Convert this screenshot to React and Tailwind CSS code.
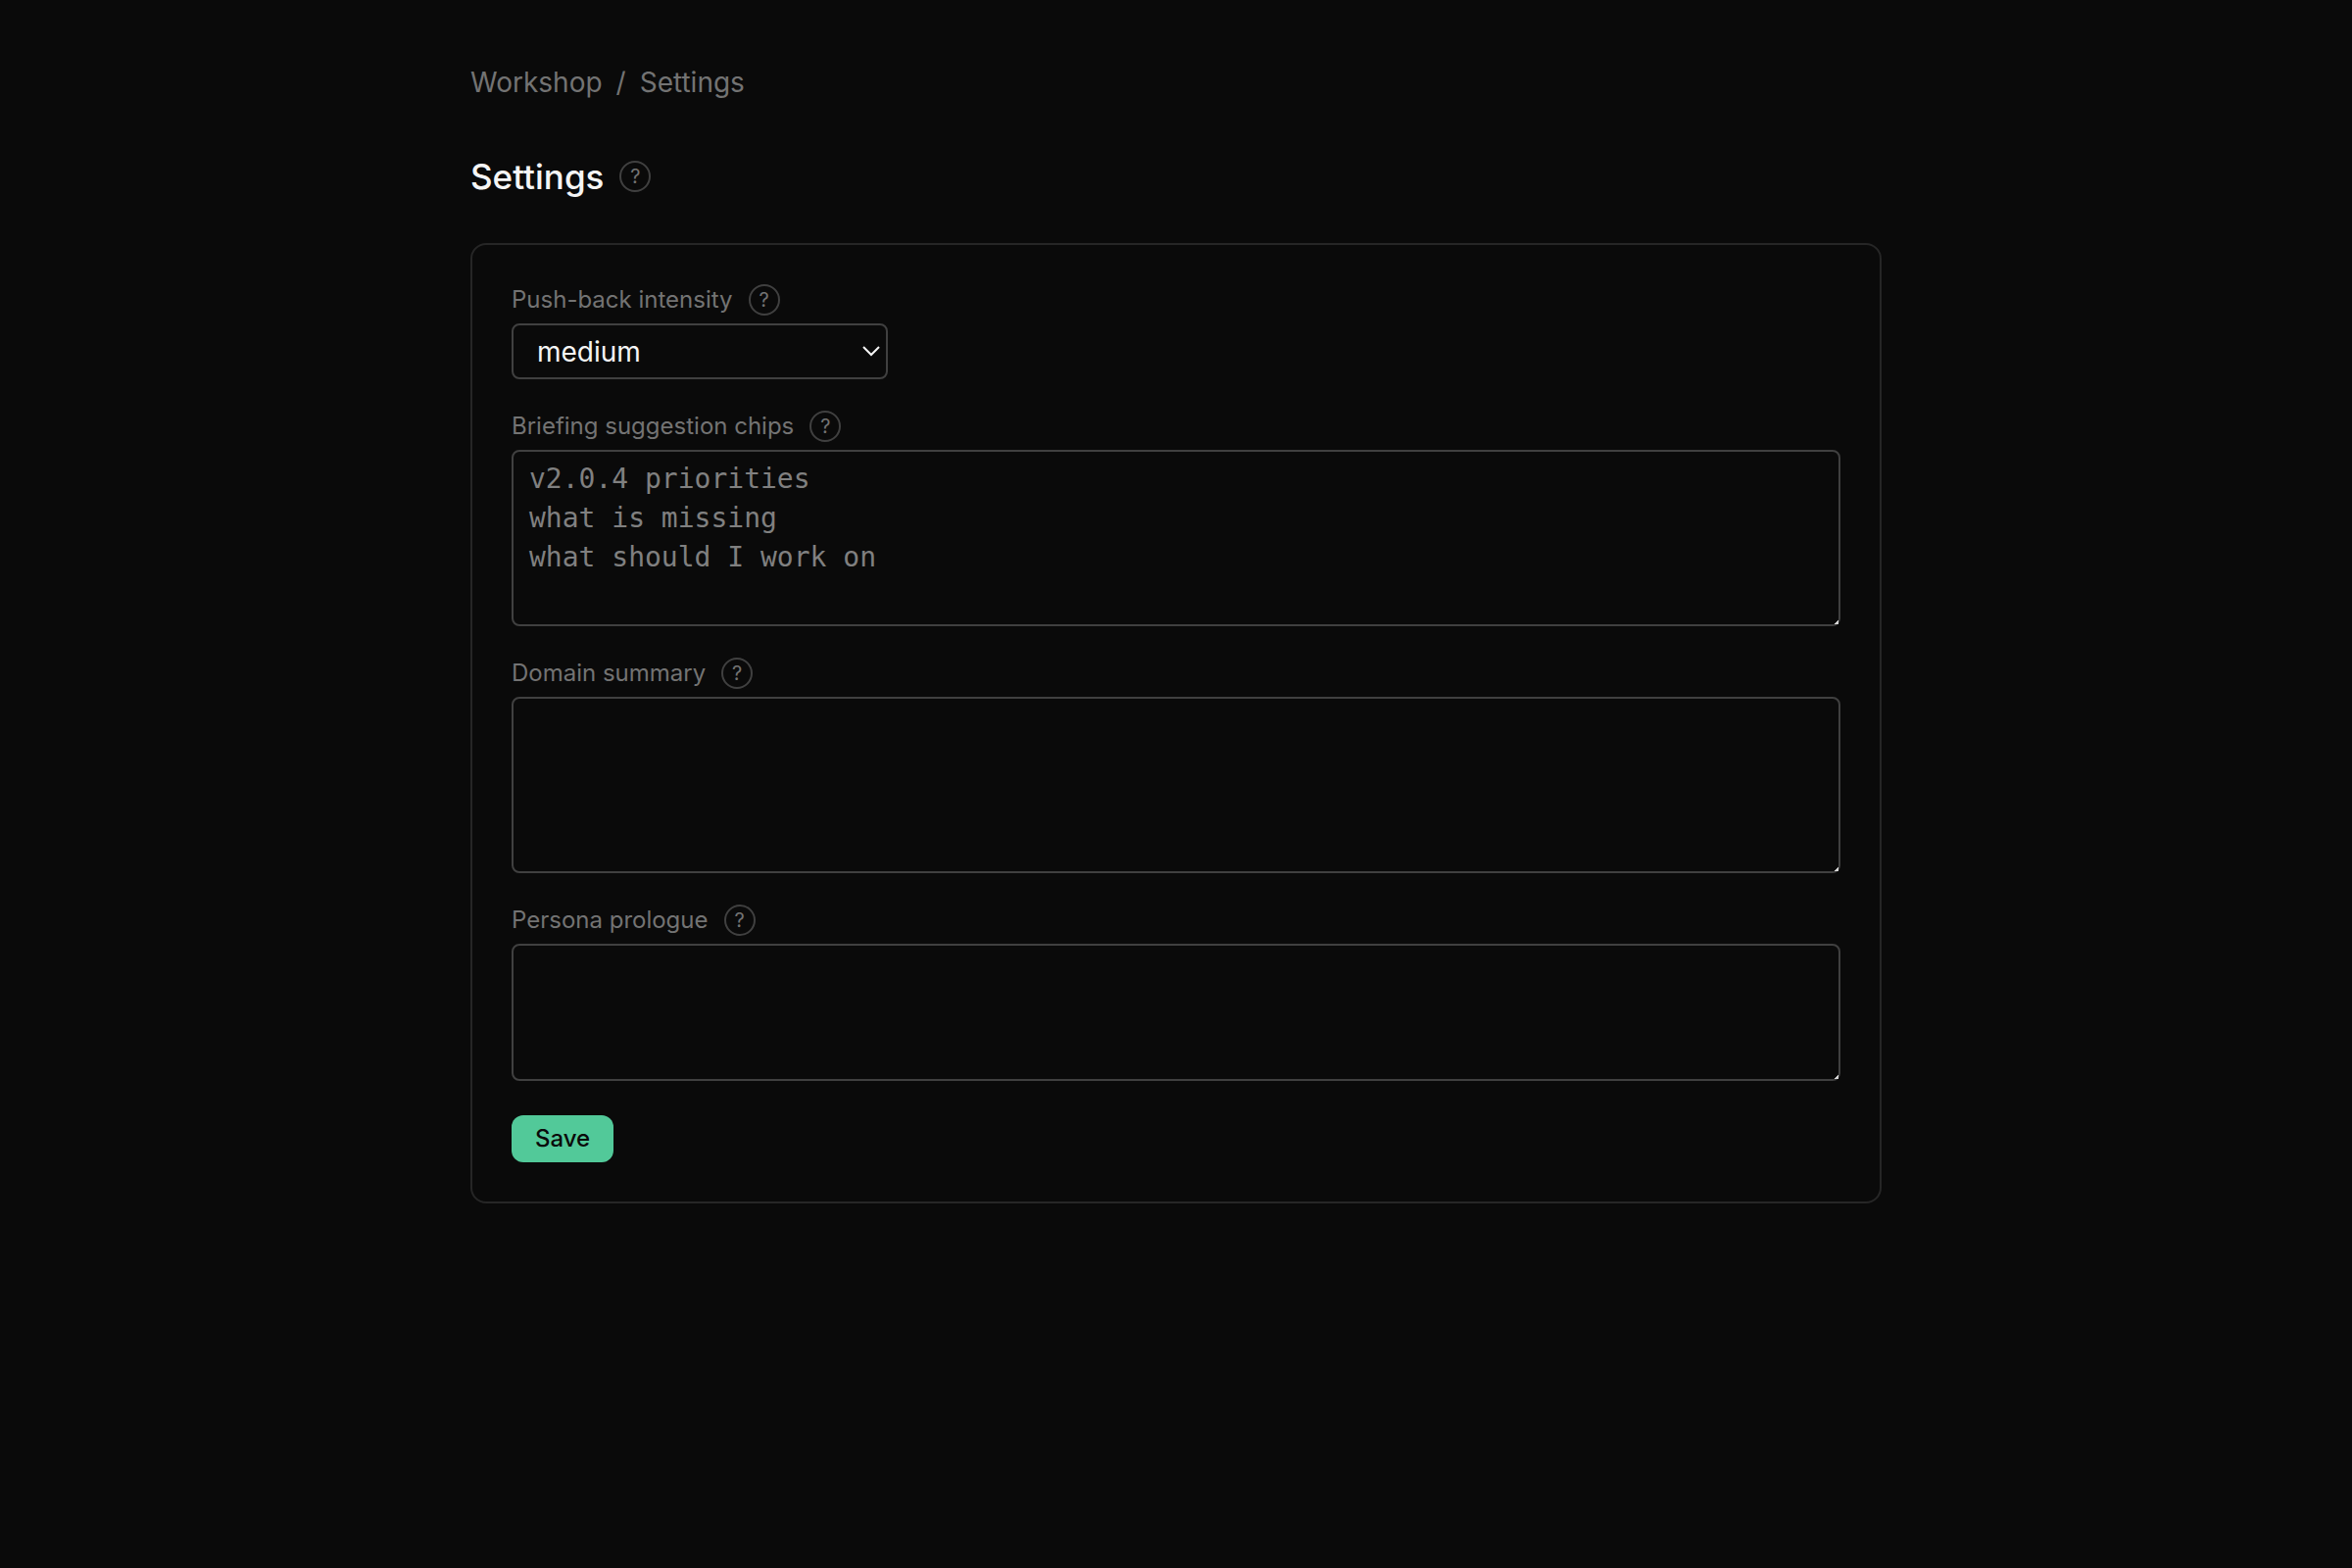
import { useState } from "react";

const INTENSITIES = ["low", "medium", "high"];

function HelpButton({ topic }) {
  return (
    <button
      type="button"
      aria-label={`Help: ${topic}`}
      className="flex size-8 shrink-0 items-center justify-center rounded-full border-2 border-[#404040] text-[20px] leading-none text-[#737373]"
    >
      ?
    </button>
  );
}

function Field({ id, label, children }) {
  return (
    <div className="flex flex-col gap-2">
      <div className="flex items-center gap-4">
        <label htmlFor={id} className="text-2xl text-[#737373]">
          {label}
        </label>
        <HelpButton topic={label} />
      </div>
      {children}
    </div>
  );
}

function TextArea({ id, value, onChange, placeholder, className }) {
  return (
    <textarea
      id={id}
      value={value}
      onChange={(e) => onChange(e.target.value)}
      placeholder={placeholder}
      className={`block w-full rounded-lg border-2 border-[#404040] bg-[#0a0a0a] px-4 py-2 font-['DejaVu_Sans_Mono',monospace] text-[28px] leading-10 text-[#f5f5f5] placeholder:text-[#808080] [&::-webkit-resizer]:bg-[linear-gradient(135deg,transparent_84%,#d4d4d4_84%)] ${className}`}
    />
  );
}

export default function App() {
  const [intensity, setIntensity] = useState("medium");
  const [chips, setChips] = useState("");
  const [summary, setSummary] = useState("");
  const [prologue, setPrologue] = useState("");

  return (
    <div className="min-h-screen bg-[#0a0a0a] font-['Inter',sans-serif] text-[#f5f5f5] [color-scheme:dark]">
      <main className="mx-auto max-w-[1440px] pt-16 pb-16">
        <nav aria-label="Breadcrumb" className="flex gap-3.5 text-[28px] leading-10 text-[#737373]">
          <a href="#workshop">Workshop</a>
          <span>/</span>
          <span>Settings</span>
        </nav>

        <div className="mt-12 flex items-center gap-4">
          <h1 className="text-[35px] leading-14 font-medium">Settings</h1>
          <HelpButton topic="Settings" />
        </div>

        <form
          onSubmit={(e) => e.preventDefault()}
          className="mt-10 flex flex-col gap-8 rounded-2xl border-2 border-[#262626] p-10"
        >
          <Field id="intensity" label="Push-back intensity">
            <div className="relative w-96">
              <select
                id="intensity"
                value={intensity}
                onChange={(e) => setIntensity(e.target.value)}
                className="block h-[57px] w-full appearance-none rounded-lg border-2 border-[#404040] bg-[#0a0a0a] px-6 text-[28px]"
              >
                {INTENSITIES.map((level) => (
                  <option key={level} value={level}>
                    {level}
                  </option>
                ))}
              </select>
              <svg
                aria-hidden="true"
                viewBox="0 0 20 12"
                fill="none"
                stroke="currentColor"
                strokeWidth="2"
                className="pointer-events-none absolute top-[22px] right-[7px] h-3 w-5"
              >
                <path d="M2 2l8 8 8-8" />
              </svg>
            </div>
          </Field>

          <Field id="chips" label="Briefing suggestion chips">
            <TextArea
              id="chips"
              value={chips}
              onChange={setChips}
              placeholder={"v2.0.4 priorities\nwhat is missing\nwhat should I work on"}
              className="h-[180px]"
            />
          </Field>

          <Field id="summary" label="Domain summary">
            <TextArea id="summary" value={summary} onChange={setSummary} className="h-[180px]" />
          </Field>

          <Field id="prologue" label="Persona prologue">
            <TextArea id="prologue" value={prologue} onChange={setPrologue} className="h-[140px]" />
          </Field>

          <button
            type="submit"
            className="mt-[3px] h-12 self-start rounded-xl bg-[#52c999] px-6 text-2xl font-medium text-[#0a0a0a]"
          >
            Save
          </button>
        </form>
      </main>
    </div>
  );
}
